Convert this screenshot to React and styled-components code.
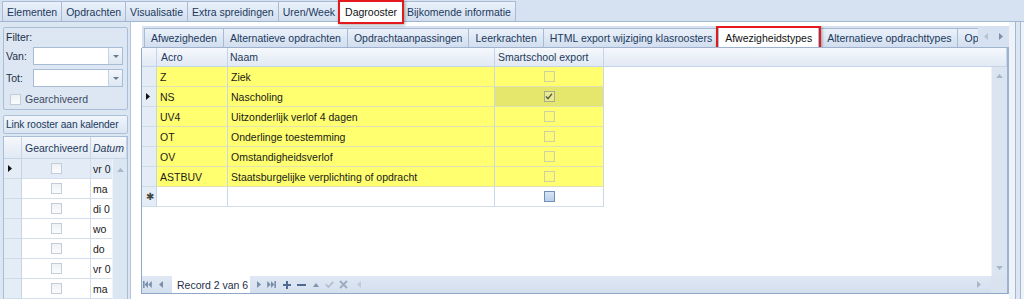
import React from 'react';
import styled, { createGlobalStyle, css } from 'styled-components';

const GlobalStyle = createGlobalStyle`
  html, body { margin: 0; padding: 0; }
  body {
    font-family: "Liberation Sans", Arial, sans-serif;
    font-size: 10.5px;
    color: #1a1a1a;
    background: #ffffff;
  }
  * { box-sizing: border-box; }
`;

const Window = styled.div`
  width: 1024px;
  height: 299px;
  overflow: hidden;
  display: flex;
  flex-direction: column;
  background: #ffffff;
`;

/* ---------- top tabs ---------- */
const TopTabStrip = styled.div`
  display: flex;
  align-items: flex-end;
  height: 22px;
  flex: none;
  padding-left: 2px;
  background: #d6e2f1;
  border-bottom: 1px solid #a2b6d0;
`;

const TopTab = styled.div`
  position: relative;
  height: 20px;
  padding: 0 4px;
  display: flex;
  align-items: center;
  border: 1px solid #a9bbd4;
  border-bottom: none;
  margin-right: -1px;
  background: linear-gradient(#eaf1fa, #d2deef);
  color: #20395c;
  white-space: nowrap;
  ${p => p.$active && css`
    height: 21px;
    margin-bottom: -1px;
    padding: 0 5px;
    background: #ffffff;
    color: #111;
    z-index: 2;
  `}
`;

const RedMark = styled.span`
  position: absolute;
  inset: ${p => p.$inset || '-2px'};
  border: 2px solid #e3191b;
  box-shadow: 1px 1px 3px rgba(0, 0, 0, 0.35);
  pointer-events: none;
  z-index: 3;
`;

/* ---------- body ---------- */
const Body = styled.div`
  display: flex;
  flex: 1;
  min-height: 0;
`;

const LeftPanel = styled.div`
  width: 131px;
  flex: none;
  background: #dbe6f3;
  border-right: 1px solid #b3c5dc;
  padding: 5px 2px 0 3px;
  display: flex;
  flex-direction: column;
  overflow: hidden;
`;

const FilterGroup = styled.div`
  height: 86px;
  border: 1px solid #a9bdd6;
  border-radius: 2px;
  background: #dde7f4;
  padding: 3px 4px 0 2px;
  display: flex;
  flex-direction: column;
`;

const GroupLabel = styled.div`
  height: 13px;
  line-height: 13px;
  color: #1f2f45;
`;

const FieldRow = styled.div`
  display: flex;
  align-items: center;
  height: 18px;
  margin-top: ${p => p.$top || 4}px;
`;

const FieldLabel = styled.div`
  width: 27px;
  color: #1f2f45;
`;

const Combo = styled.div`
  flex: 1;
  height: 18px;
  display: flex;
  background: #fff;
  border: 1px solid #a9bcd5;
`;

const ComboButton = styled.div`
  width: 14px;
  margin-left: auto;
  border-left: 1px solid #c5d3e5;
  background: linear-gradient(#f3f7fc, #dde7f3);
  display: flex;
  align-items: center;
  justify-content: center;
`;

const CheckRow = styled.label`
  display: flex;
  align-items: center;
  gap: 4px;
  margin-top: 6px;
  padding-left: 4px;
  color: #3b4a5e;
`;

const Box = styled.span`
  width: 11px;
  height: 11px;
  flex: none;
  display: inline-flex;
  align-items: center;
  justify-content: center;
  border: 1px solid ${p => p.$border || '#bcc6d2'};
  background: ${p => p.$bg || 'linear-gradient(#eef1f5, #fbfcfd)'};
`;

const LinkButton = styled.div`
  margin-top: 5px;
  height: 20px;
  line-height: 18px;
  padding-left: 2px;
  border: 1px solid #abc0d9;
  border-radius: 2px;
  background: linear-gradient(#f2f6fb, #dae5f2);
  color: #20395c;
  font-size: 10.2px;
  letter-spacing: -0.1px;
  white-space: nowrap;
  overflow: hidden;
`;

const SmallGrid = styled.div`
  margin-top: 2px;
  flex: 1;
  position: relative;
  background: #fff;
  border: 1px solid #a9bdd6;
  border-bottom: none;
  display: flex;
  flex-direction: column;
`;

const GRow = styled.div`
  display: flex;
  height: ${p => p.$h || 20}px;
  flex: none;
`;

const Cell = styled.div`
  width: ${p => (p.$w ? p.$w + 'px' : 'auto')};
  flex: ${p => (p.$w ? 'none' : '1')};
  display: flex;
  align-items: center;
  justify-content: ${p => (p.$center ? 'center' : 'flex-start')};
  padding-left: ${p => (p.$center ? 0 : p.$pad ?? 4)}px;
  border-right: 1px solid ${p => p.$line || '#d3deea'};
  border-bottom: 1px solid ${p => p.$hline || '#d3deea'};
  background: ${p => p.$bg || 'transparent'};
  white-space: nowrap;
  overflow: hidden;
  font-style: ${p => (p.$italic ? 'italic' : 'normal')};
  color: ${p => p.$color || '#1a1a1a'};
`;

const HeadCell = styled(Cell)`
  background: linear-gradient(#f5f8fc, #e1e9f4);
  color: #1e395b;
  border-right-color: #c5d4e6;
  border-bottom-color: #c5d4e6;
`;

const IndCell = styled(Cell)`
  background: #e4ecf6;
  border-right-color: #c5d4e6;
  border-bottom-color: #d0dbe8;
  padding-left: 4px;
`;

const SmallVScroll = styled.div`
  position: absolute;
  right: 0;
  top: 22px;
  bottom: 0;
  width: 15px;
  background: #dbe6f3;
  border-left: 1px solid #edf2f9;
  display: flex;
  justify-content: center;
  padding-top: 9px;
`;

/* ---------- main pane ---------- */
const MainPane = styled.div`
  flex: 1;
  display: flex;
  padding: 4px 0 5px 10px;
  background: #fff;
  min-width: 0;
`;

const TabControl = styled.div`
  width: 868px;
  flex: none;
  display: flex;
  flex-direction: column;
`;

const InnerTabStrip = styled.div`
  height: 22px;
  flex: none;
  display: flex;
  background: #d6e2f1;
  border-bottom: 1px solid #9fb3ce;
  margin-left: 1px;
`;

const TabsViewport = styled.div`
  flex: none;
  width: 836px;
  overflow: hidden;
  display: flex;
  align-items: flex-end;
  padding-left: 2px;
`;

const InnerTab = styled(TopTab)`
  height: 19px;
  padding: 0 6px;
  flex: none;
  ${p => p.$active && css`
    height: 21px;
    margin-bottom: -1px;
    margin-left: 0;
    margin-right: 1px;
    padding: 0 6px;
  `}
`;

const TabArrows = styled.div`
  flex: 1;
  display: flex;
  align-items: center;
  justify-content: flex-start;
  gap: 11px;
  padding-left: 6px;
`;

const RightEdge = styled.div`
  width: 15px;
  flex: none;
  margin: -4px 0 -5px;
  background: linear-gradient(
    to right,
    #eef3f9 0 6px,
    #a4b7d0 6px 7px,
    #dde7f3 7px 11px,
    #a4b7d0 11px 12px,
    #eef3f9 12px
  );
`;

const GridFrame = styled.div`
  flex: 1;
  display: flex;
  flex-direction: column;
  border: 1px solid #8fa7c8;
  border-top: none;
  border-right: 2px solid #9cb2cf;
  background: #fff;
  min-height: 0;
`;

const GridMiddle = styled.div`
  flex: 1;
  display: flex;
  min-height: 0;
`;

const RowsArea = styled.div`
  flex: 1;
  display: flex;
  flex-direction: column;
`;

const VScroll = styled.div`
  width: 16px;
  flex: none;
  background: #dbe5f2;
  border-left: 1px solid #eef3f9;
  display: flex;
  flex-direction: column;
  align-items: center;
  justify-content: space-between;
  padding: 7px 0 6px;
`;

const BottomBar = styled.div`
  height: 17px;
  flex: none;
  display: flex;
  background: linear-gradient(#dfe8f4, #d4dfee);
`;

const Navigator = styled.div`
  display: flex;
  align-items: center;
`;

const NavBtn = styled.span`
  display: inline-flex;
  align-items: center;
  justify-content: center;
  flex: none;
  width: ${p => p.$w || 11}px;
  height: 17px;
`;

const RecordBox = styled.div`
  height: 17px;
  width: 78px;
  flex: none;
  margin: 0 4px 0 3px;
  padding-left: 5px;
  display: flex;
  align-items: center;
  background: #fff;
  color: #1f2f45;
  white-space: nowrap;
`;

const HScroll = styled.div`
  flex: 1;
  display: flex;
  align-items: center;
  justify-content: space-between;
  padding: 0 10px 0 6px;
`;

const Corner = styled.div`
  width: 16px;
  flex: none;
  background: #d9e3f0;
`;

/* ---------- icons ---------- */
const Tri = ({ dir, color = '#8a9ab0', w = 7, h = 4 }) => {
  const paths = {
    down: `M0 0H${w}L${w / 2} ${h}Z`,
    up: `M0 ${h}H${w}L${w / 2} 0Z`,
    left: `M${w} 0V${h}L0 ${h / 2}Z`,
    right: `M0 0V${h}L${w} ${h / 2}Z`,
  };
  return (
    <svg width={w} height={h} viewBox={`0 0 ${w} ${h}`}>
      <path d={paths[dir]} fill={color} />
    </svg>
  );
};

const NavIcon = ({ kind, color }) => {
  switch (kind) {
    case 'first':
      return (
        <svg width="9" height="7" viewBox="0 0 9 7">
          <rect x="0" y="0" width="1.6" height="7" fill={color} />
          <path d="M5 0L1.6 3.5L5 7Z M8.8 0L5.3 3.5L8.8 7Z" fill={color} />
        </svg>
      );
    case 'last':
      return (
        <svg width="9" height="7" viewBox="0 0 9 7">
          <path d="M0.2 0L3.7 3.5L0.2 7Z M4 0L7.4 3.5L4 7Z" fill={color} />
          <rect x="7.4" y="0" width="1.6" height="7" fill={color} />
        </svg>
      );
    case 'add':
      return (
        <svg width="8" height="8" viewBox="0 0 8 8">
          <path d="M3 0h2v3h3v2H5v3H3V5H0V3h3z" fill={color} />
        </svg>
      );
    case 'remove':
      return (
        <svg width="9" height="2" viewBox="0 0 9 2">
          <rect width="9" height="2" fill={color} />
        </svg>
      );
    case 'check':
      return (
        <svg width="9" height="7" viewBox="0 0 9 7">
          <path d="M0.8 3.4L3.4 6L8.3 0.8" stroke={color} strokeWidth="1.7" fill="none" />
        </svg>
      );
    case 'cancel':
      return (
        <svg width="9" height="9" viewBox="0 0 9 9">
          <path d="M1 1L8 8M8 1L1 8" stroke={color} strokeWidth="1.9" fill="none" />
        </svg>
      );
    default:
      return null;
  }
};

const CheckMark = () => (
  <svg width="8" height="7" viewBox="0 0 8 7">
    <path d="M1 3.5L3 5.6L7 0.8" stroke="#5b5b50" strokeWidth="1.4" fill="none" />
  </svg>
);

const RowPointer = () => <Tri dir="right" color="#111" w={4} h={7} />;

const Asterisk = styled.span`
  font-size: 10px;
  color: #444;
  line-height: 1;
`;

/* ---------- data ---------- */
const topTabs = ['Elementen', 'Opdrachten', 'Visualisatie', 'Extra spreidingen', 'Uren/Week', 'Dagrooster', 'Bijkomende informatie'];
const innerTabs = [
  'Afwezigheden',
  'Alternatieve opdrachten',
  'Opdrachtaanpassingen',
  'Leerkrachten',
  'HTML export wijziging klasroosters',
  'Afwezigheidstypes',
  'Alternatieve opdrachttypes',
  'Opmerkingen',
];
const types = [
  ['Z', 'Ziek', false],
  ['NS', 'Nascholing', true],
  ['UV4', 'Uitzonderlijk verlof 4 dagen', false],
  ['OT', 'Onderlinge toestemming', false],
  ['OV', 'Omstandigheidsverlof', false],
  ['ASTBUV', 'Staatsburgelijke verplichting of opdracht', false],
];
const dates = ['vr 0', 'ma', 'di 0', 'wo', 'do', 'vr 0', 'ma'];

const YELLOW = '#ffff70';
const YLINE = '#dfe2b4';
const VLINE = '#c9d7e7';

export default function App() {
  return (
    <Window>
      <GlobalStyle />
      <TopTabStrip>
        {topTabs.map(t => (
          <TopTab key={t} $active={t === 'Dagrooster'}>
            {t}
            {t === 'Dagrooster' && <RedMark />}
          </TopTab>
        ))}
      </TopTabStrip>

      <Body>
        <LeftPanel>
          <FilterGroup>
            <GroupLabel>Filter:</GroupLabel>
            <FieldRow $top={3}>
              <FieldLabel>Van:</FieldLabel>
              <Combo>
                <ComboButton><Tri dir="down" color="#6c7c90" w={6} h={3} /></ComboButton>
              </Combo>
            </FieldRow>
            <FieldRow $top={4}>
              <FieldLabel>Tot:</FieldLabel>
              <Combo>
                <ComboButton><Tri dir="down" color="#6c7c90" w={6} h={3} /></ComboButton>
              </Combo>
            </FieldRow>
            <CheckRow>
              <Box $border="#c3ccd7" />
              Gearchiveerd
            </CheckRow>
          </FilterGroup>
          <LinkButton>Link rooster aan kalender</LinkButton>
          <SmallGrid>
            <GRow $h={22}>
              <HeadCell $w={18} />
              <HeadCell $w={69} $pad={3}>Gearchiveerd</HeadCell>
              <HeadCell $italic $pad={2} $line="transparent">Datum</HeadCell>
            </GRow>
            {dates.map((d, i) => (
              <GRow key={i}>
                <IndCell $w={18}>{i === 0 && <RowPointer />}</IndCell>
                <Cell $w={69} $center $bg={i === 0 ? '#e2ebf6' : '#fff'} $line="#d3deea">
                  <Box $border="#c3ccd7" />
                </Cell>
                <Cell $pad={2} $bg={i === 0 ? '#e2ebf6' : '#fff'} $line="transparent">{d}</Cell>
              </GRow>
            ))}
            <SmallVScroll><Tri dir="up" color="#a8b6c8" w={7} h={4} /></SmallVScroll>
          </SmallGrid>
        </LeftPanel>

        <MainPane>
          <TabControl>
            <InnerTabStrip>
              <TabsViewport>
                {innerTabs.map(t => (
                  <InnerTab key={t} $active={t === 'Afwezigheidstypes'}>
                    {t}
                    {t === 'Afwezigheidstypes' && <RedMark $inset="-2px -3px -2px -3px" />}
                  </InnerTab>
                ))}
              </TabsViewport>
              <TabArrows>
                <Tri dir="left" color="#b7c2d0" w={4} h={7} />
                <Tri dir="right" color="#7d8ea6" w={4} h={7} />
              </TabArrows>
            </InnerTabStrip>

            <GridFrame>
              <GRow $h={19}>
                <HeadCell $w={15} />
                <HeadCell $w={71} $pad={4}>Acro</HeadCell>
                <HeadCell $w={267} $pad={2}>Naam</HeadCell>
                <HeadCell $w={109} $pad={3}>Smartschool export</HeadCell>
                <HeadCell $line="transparent" />
              </GRow>
              <GridMiddle>
                <RowsArea>
                  {types.map(([acro, naam, checked]) => (
                    <GRow key={acro}>
                      <IndCell $w={15} $pad={5}>{checked && <RowPointer />}</IndCell>
                      <Cell $w={71} $bg={YELLOW} $line={VLINE} $hline={YLINE} $pad={3}>{acro}</Cell>
                      <Cell $w={267} $bg={YELLOW} $line={VLINE} $hline={YLINE} $pad={3}>{naam}</Cell>
                      <Cell $w={109} $center $bg={checked ? '#e4e76c' : YELLOW} $line={VLINE} $hline={YLINE}>
                        <Box $border={checked ? '#a9ab8a' : '#d0d2a0'} $bg={checked ? '#e9ec8c' : '#fbfb78'}>
                          {checked && <CheckMark />}
                        </Box>
                      </Cell>
                      <Cell $line="transparent" $hline="transparent" />
                    </GRow>
                  ))}
                  <GRow>
                    <IndCell $w={15} $pad={3}><Asterisk>✱</Asterisk></IndCell>
                    <Cell $w={71} $line={VLINE} />
                    <Cell $w={267} $line={VLINE} />
                    <Cell $w={109} $center $line={VLINE}>
                      <Box $border="#6f8fb9" $bg="linear-gradient(#d7e4f3, #bcd0ea)" />
                    </Cell>
                    <Cell $line="transparent" $hline="transparent" />
                  </GRow>
                </RowsArea>
                <VScroll>
                  <Tri dir="up" color="#a9b6c7" w={7} h={4} />
                  <Tri dir="down" color="#a9b6c7" w={7} h={4} />
                </VScroll>
              </GridMiddle>
              <BottomBar>
                <Navigator>
                  <NavBtn $w={11}><NavIcon kind="first" color="#7b8fab" /></NavBtn>
                  <NavBtn $w={16}><Tri dir="left" color="#7b8fab" w={4} h={7} /></NavBtn>
                  <RecordBox>Record 2 van 6</RecordBox>
                  <NavBtn $w={9}><Tri dir="right" color="#7b8fab" w={4} h={7} /></NavBtn>
                  <NavBtn $w={17}><NavIcon kind="last" color="#7b8fab" /></NavBtn>
                  <NavBtn $w={13}><NavIcon kind="add" color="#4d6b93" /></NavBtn>
                  <NavBtn $w={16}><NavIcon kind="remove" color="#4d6b93" /></NavBtn>
                  <NavBtn $w={13}><Tri dir="up" color="#8194ae" w={6} h={4} /></NavBtn>
                  <NavBtn $w={14}><NavIcon kind="check" color="#b2becd" /></NavBtn>
                  <NavBtn $w={15}><NavIcon kind="cancel" color="#9eacbe" /></NavBtn>
                </Navigator>
                <HScroll>
                  <Tri dir="left" color="#c2ccd9" w={4} h={7} />
                  <Tri dir="right" color="#a9b6c7" w={4} h={7} />
                </HScroll>
                <Corner />
              </BottomBar>
            </GridFrame>
          </TabControl>
          <RightEdge />
        </MainPane>
      </Body>
    </Window>
  );
}
